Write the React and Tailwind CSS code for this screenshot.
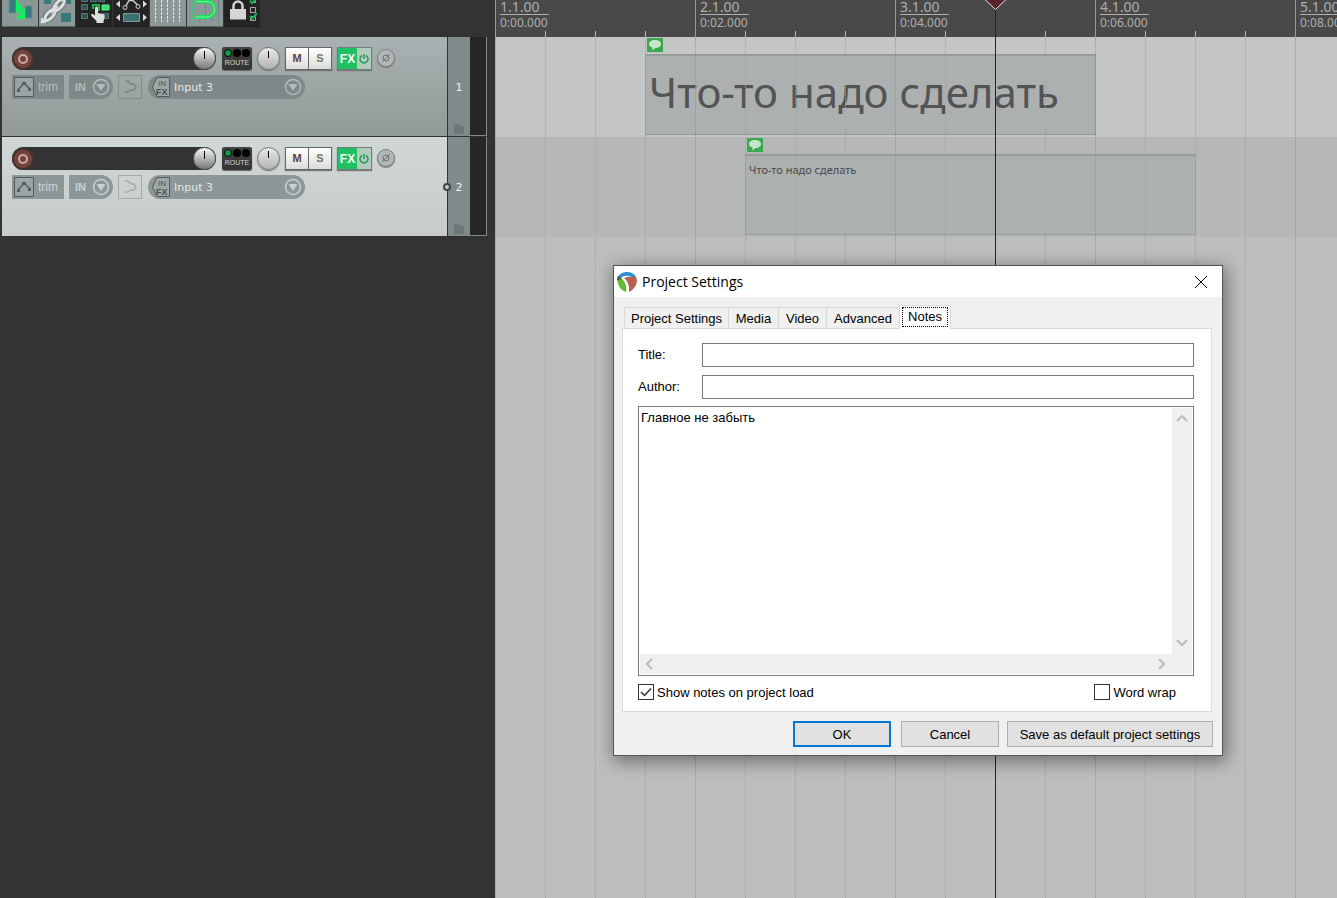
import React from "react";

const BEATS = Array.from({ length: 17 }, (_, i) => i);

const MEASURES = [
  { bar: "1.1.00", time: "0:00.000" },
  { bar: "2.1.00", time: "0:02.000" },
  { bar: "3.1.00", time: "0:04.000" },
  { bar: "4.1.00", time: "0:06.000" },
  { bar: "5.1.00", time: "0:08.000" },
];

const TABS = [
  { name: "Project Settings", width: "w-[104px]" },
  { name: "Media", width: "w-[50px]" },
  { name: "Video", width: "w-[48px]" },
  { name: "Advanced", width: "w-[73px]" },
];

/* ---------- TOOLBAR ---------- */

const ToolButton = ({ label, active, children }) => (
  <button
    aria-label={label}
    className={
      active
        ? "h-[27px] w-[36px] border-b border-[#5c6464] bg-[#8c9898]"
        : "h-[27px] w-[36px] border-b border-[#1c1c1c] bg-[#242424]"
    }
  >
    <svg width="36" height="26" viewBox="0 0 36 26" fill="none">
      {children}
    </svg>
  </button>
);

const Toolbar = () => (
  <div className="flex h-[37px] gap-px pl-[2px]">
    <ToolButton label="Auto-crossfade" active>
      <path d="M7-1h7v14h-7z M23 6h7v12h-7z" fill="#367a7e" stroke="#6d8a8b" />
      <path d="M14-1v14h2l5-4z" fill="#0cf25a" />
      <path d="M23 7v12h-9z" fill="#0cf25a" />
    </ToolButton>
    <ToolButton label="Item grouping" active>
      <path d="M5 0h7v4h-7z M4 14h5v8h-5z M21 0h11v4h-11z M22 13h10v9h-10z" fill="#367a7e" />
      <g stroke="#6a7676" strokeWidth="5">
        <ellipse cx="11" cy="15" rx="7" ry="3" transform="rotate(-48 11 15)" />
        <ellipse cx="20" cy="5" rx="7" ry="3" transform="rotate(-48 20 5)" />
      </g>
      <g stroke="#dcdfdf" strokeWidth="3">
        <ellipse cx="11" cy="15" rx="7" ry="3" transform="rotate(-48 11 15)" />
        <ellipse cx="20" cy="5" rx="7" ry="3" transform="rotate(-48 20 5)" />
      </g>
      <path d="M2 23l5-5M12 13l7-7M3 18v4h4" stroke="#dcdfdf" strokeWidth="2" />
    </ToolButton>
    <ToolButton label="Ripple editing">
      <path
        d="M5.5-2.500h6v4h-6z M14.500-2.500h6v4h-6z M22.500-2.500h6v4h-6z M5.500 4.500h6v5h-6z M5.500 13.500h6v5h-6z M26.500 13.500h6v5h-6z"
        fill="#2f5557"
        stroke="#5c7476"
      />
      <path d="M26 5h7v5h-7z" fill="#2fe06c" stroke="#63f091" />
      <path d="M17 9v-4h6v6" stroke="#12b84e" strokeWidth="2" />
      <path
        d="M19 8c0-2 3-2 3 0v5l5 1c2 .5 2 2 1.500 4l-1 3v2h-7v-2l-5-5c-1-2 1-3 2-1.500l1.500 1z"
        fill="#dedede"
      />
    </ToolButton>
    <ToolButton label="Envelope points">
      <path d="M12 7.500l4-7h4l5 5" stroke="#cfcfcf" strokeWidth="1.500" />
      <circle cx="12" cy="7.500" r="2" fill="#242424" stroke="#cfcfcf" />
      <circle cx="25" cy="6.500" r="2" fill="#242424" stroke="#cfcfcf" />
      <path d="M7 0.500v7l-4-3.500z M30 0.500v7l4-3.500z M7 14v7l-4-3.500z M30 14v7l4-3.500z" fill="#dadada" />
      <path d="M10.500 13.500h16v8h-16z" fill="#3c7074" stroke="#7f9799" />
    </ToolButton>
    <ToolButton label="Grid lines" active>
      <path d="M5.500 0v22M11.500 0v22M17.500 0v22M23.500 0v22M29.500 0v22" stroke="#e4e7e7" strokeDasharray="3 1" />
    </ToolButton>
    <ToolButton label="Snapping" active>
      <path d="M6 0v22" stroke="#18e05c" strokeDasharray="2 1" strokeWidth="1.500" />
      <path d="M18.500 0v22M31.500 0v22M12.500 20v2M25.500 16v6" stroke="#6c7878" strokeDasharray="2 1" />
      <path d="M9 1.500h11a7.500 7.500 0 0 1 0 15.500h-11" stroke="#16e25e" strokeWidth="4" />
      <path d="M9 1.500h11a7.500 7.500 0 0 1 0 15.500h-11" stroke="#7df0a4" />
    </ToolButton>
    <ToolButton label="Locking">
      <path d="M9.500 10v-4a4.500 4.500 0 0 1 9 0v4" stroke="#d6d6d6" strokeWidth="2.500" />
      <path d="M6 9h16v10.500h-16z" fill="#d6d6d6" />
      <path d="M26.500-2.500h5v5h-5z M26.500 7.500h5v5h-5z M26.500 16.500h5v4h-5z" stroke="#a8a8a8" />
      <path d="M26 1l2 2 5-5M26 16l2 3 5-6" stroke="#14b33f" strokeWidth="2" />
    </ToolButton>
  </div>
);

/* ---------- TRACK PANEL ---------- */

const DropArrow = () => (
  <svg className="shrink-0" width="18" height="18" viewBox="0 0 18 18" fill="none">
    <circle cx="9" cy="9" r="7.500" stroke="currentColor" strokeWidth="1.500" />
    <path d="M4.500 6h9l-4.500 7z" fill="currentColor" />
  </svg>
);

const Track = ({ number, selected }) => (
  <div className="flex h-[100px] border-b border-[#303030]">
    <div
      className={
        selected
          ? "min-w-0 flex-1 border-r border-[#333] bg-linear-to-b from-[#d0d8d7] to-[#c7cbcb] pt-[10px] pl-[10px]"
          : "min-w-0 flex-1 border-r border-[#333] bg-linear-to-b from-[#a9b1b2] to-[#919a98] pt-[10px] pl-[10px]"
      }
    >
      {/* record, volume, route, pan, mute, solo, fx, phase */}
      <div className="flex h-[24px] items-start">
        <div className="flex h-[23px] w-[204px] items-center justify-between rounded-full bg-[#333]">
          <button aria-label="Record arm" className="flex h-[22px] w-[22px] items-center justify-center rounded-full border-2 border-[#45332f] bg-[#74443a]">
            <span className="h-[10px] w-[10px] rounded-full border-2 border-[#c9aca5]"></span>
          </button>
          <button aria-label="Volume" className="flex h-[23px] w-[23px] justify-center rounded-full border border-[#555] bg-linear-to-b from-[#fafafa] to-[#777] pt-[3px]">
            <span className="h-[8px] w-px bg-black"></span>
          </button>
        </div>
        <button className="ml-[6px] flex h-[23px] w-[30px] flex-col items-center rounded-xs bg-linear-to-b from-[#444] to-[#343434] pt-[2px] shadow-[0_1px_1px_#666]">
          <span className="flex gap-px">
            <i className="h-[8px] w-[8px] rounded-full border border-black bg-[#0c9c48]"></i>
            <i className="h-[8px] w-[8px] rounded-full bg-black"></i>
            <i className="h-[8px] w-[8px] rounded-full bg-black"></i>
          </span>
          <span className="text-[7px] leading-[12px] text-[#d4d4d4]">ROUTE</span>
        </button>
        <button aria-label="Pan" className="ml-[5px] flex h-[23px] w-[23px] justify-center rounded-full border border-[#777] bg-linear-to-b from-[#e9e9e9] to-[#b3b3b3] pt-[3px] shadow-[0_1px_1px_#777]">
          <span className="h-[7px] w-px bg-black"></span>
        </button>
        <button className="ml-[5px] h-[23px] w-[24px] border border-[#666] bg-linear-to-b from-white to-[#dcdcdc] text-[11px] font-bold text-[#65402f] shadow-[0_1px_1px_#777]">M</button>
        <button className="h-[23px] w-[23px] border border-l-0 border-[#666] bg-linear-to-b from-white to-[#dcdcdc] text-[11px] font-bold text-[#73784f] shadow-[0_1px_1px_#777]">S</button>
        <div className="ml-[5px] flex h-[23px] w-[35px] border border-[#6f7f76] shadow-[0_1px_1px_#777]">
          <button className="w-[19px] bg-[#20c065] text-[12px] leading-[20px] font-bold text-white">FX</button>
          <button aria-label="FX bypass" className="flex flex-1 items-center justify-center bg-[#b2cdbd]">
            <svg width="10" height="10" viewBox="0 0 10 10" fill="none" stroke="#279a5d" strokeWidth="1.500">
              <path d="M3 1.500a4 4 0 1 0 4 0M5 0v5" />
            </svg>
          </button>
        </div>
        <button aria-label="Phase" className="mt-[2px] ml-[5px] flex h-[18px] w-[18px] items-center justify-center rounded-full border border-[#7d8484] bg-[#b2b8b8] shadow-[0_1px_1px_#777]">
          <svg width="10" height="10" viewBox="0 0 10 10" fill="none" stroke="#6b7272">
            <circle cx="5" cy="5" r="3" />
            <path d="M1 9l8-8" />
          </svg>
        </button>
      </div>

      {/* envelope, input, recording mode, input fx */}
      <div className={selected ? "mt-[4px] flex h-[24px] text-[#c9d0d0]" : "mt-[4px] flex h-[24px] text-[#b4bbbb]"}>
        <button className={selected ? "flex w-[52px] items-center bg-[#8e9797] pl-[2px]" : "flex w-[52px] items-center bg-[#7f8888] pl-[2px]"}>
          <svg width="20" height="20" viewBox="0 0 20 20" fill="none">
            <path d="M.5.5h19v19h-19z" fill="#98a4a6" stroke="#515b5b" />
            <path d="M4 13l6-7 6 6" stroke="#566060" strokeWidth="1.500" />
            <path d="M3 12h3v3h-3z M8 5h4v3h-4z M14 11h3v3h-3z" fill="#566060" />
          </svg>
          <span className="ml-[4px] text-[12px]">trim</span>
        </button>
        <button className={selected ? "ml-[5px] flex w-[44px] items-center justify-between rounded-r-full bg-[#8e9797] pr-[3px] pl-[6px]" : "ml-[5px] flex w-[44px] items-center justify-between rounded-r-full bg-[#7f8888] pr-[3px] pl-[6px]"}>
          <span className="text-[11px] font-bold">IN</span>
          <DropArrow />
        </button>
        <button aria-label="Record mode" className={selected ? "ml-[5px] w-[24px] border border-[#a3aaaa] text-[#a3aaaa]" : "ml-[5px] w-[24px] border border-[#848c8c] text-[#7c8484]"}>
          <svg width="22" height="22" viewBox="0 0 22 22" fill="none" stroke="currentColor" strokeWidth="1.500">
            <path d="M6 5h3l3 3h3l2 3-2 3h-3l-3 2h-3" />
          </svg>
        </button>
        <button className={selected ? "ml-[6px] flex w-[157px] items-center rounded-full bg-[#8e9797] pr-[3px] pl-[4px]" : "ml-[6px] flex w-[157px] items-center rounded-full bg-[#7f8888] pr-[3px] pl-[4px]"}>
          <svg className="shrink-0" width="18" height="20" viewBox="0 0 18 20">
            <path d="M5 .5h12.500v19h-12.500l-4.500-9.500z" fill="#9ca8a9" stroke="#515b5b" />
            <text x="6" y="9" fontSize="8" fill="#4a5454">IN</text>
            <text x="4" y="18" fontSize="9" fontWeight="bold" fill="#444e4e">FX</text>
          </svg>
          <span className="ml-[4px] flex-1 pt-[2px] text-left font-['DejaVu_Sans',sans-serif] text-[11px] text-[#e3e6e6]">Input 3</span>
          <DropArrow />
        </button>
      </div>
    </div>

    {/* track number and meter */}
    <div className="relative flex w-[22px] flex-col items-center bg-[#808a8b] pt-[43px] font-['DejaVu_Sans',sans-serif] text-[11px] leading-[16px] text-[#eef0f0]">
      {number}
      {selected && <span className="absolute top-[46px] -left-[5px] h-[8px] w-[8px] rounded-full border-2 border-[#444] bg-[#c8cccc]"></span>}
      <svg className="mt-auto mb-[2px]" width="10" height="10" viewBox="0 0 10 10" fill="#6e7778">
        <path d="M0 0h5l1 2h4v8h-10z" />
      </svg>
    </div>
    <div className="w-[17px] border-r border-b border-[#808a8b] bg-[#262626]"></div>
  </div>
);

/* ---------- ARRANGE VIEW ---------- */

const NoteBadge = () => (
  <svg width="16" height="14" viewBox="0 0 16 14">
    <path d="M0 0h16v14h-16z" fill="#3aa84c" />
    <path d="M8 2c4 0 6 2 6 4s-2 4-5.500 4l-3 2.500v-3c-2-.5-3.500-1.500-3.500-3.500s2-4 6-4z" fill="#c3e6c8" />
  </svg>
);

const Ruler = () => (
  <div className="relative h-[37px] bg-[#494949] text-[#aeaeae]">
    {BEATS.map((b) => (
      <span
        key={b}
        className={b % 4 === 0 ? "absolute bottom-0 h-full w-px bg-[#9a9a9a]" : "absolute bottom-0 h-[6px] w-px bg-[#b5b5b5]"}
        style={{ left: b * 50 }}
      ></span>
    ))}
    {MEASURES.map((m, i) => (
      <div key={m.bar} className="absolute top-0 flex w-[49px] flex-col font-['Noto_Sans',sans-serif]" style={{ left: i * 200 + 5 }}>
        <span className="h-[15px] border-b border-[#aeaeae] text-[14px] leading-[14px]">{m.bar}</span>
        <span className="text-[12px] leading-[16px]">{m.time}</span>
      </div>
    ))}
  </div>
);

const Arrange = () => (
  <main className="relative flex min-w-0 flex-1 flex-col overflow-hidden">
    <Ruler />
    <div className="relative flex flex-1 flex-col bg-[#bdbfbe]">
      <div className="h-[100px] bg-[#c4c6c5]"></div>
      <div className="h-[100px] bg-[#b6b8b7]"></div>

      {/* text items */}
      <div className="absolute top-px left-[150px] w-[451px]">
        <div className="h-[16px] pl-[2px]"><NoteBadge /></div>
        <div className="flex h-[81px] items-center border border-t-2 border-[#979b9c] bg-[#acb0b1] pb-[6px] pl-[3px] font-['Noto_Sans',sans-serif] text-[42px] leading-[48px] whitespace-nowrap text-[#545454]">
          Что-то надо сделать
        </div>
      </div>
      <div className="absolute top-[101px] left-[250px] w-[451px]">
        <div className="h-[16px] pl-[2px]"><NoteBadge /></div>
        <div className="h-[81px] border border-t-2 border-[#979b9c] bg-[#acb0b1] pt-[6px] pl-[3px] font-['Noto_Sans',sans-serif] text-[11px] leading-[16px] text-[#484848]">
          Что-то надо сделать
        </div>
      </div>

      {BEATS.map((b) => (
        <span
          key={b}
          className={b % 4 === 0 ? "absolute inset-y-0 border-l border-dotted border-[#949696]" : "absolute inset-y-0 border-l border-dotted border-[#a0a2a2]"}
          style={{ left: b * 50 }}
        ></span>
      ))}
    </div>

    {/* edit cursor */}
    <span className="absolute inset-y-0 left-[500px] w-px bg-[#481418]"></span>
    <svg className="absolute top-0 left-[490px]" width="21" height="11" viewBox="0 0 21 11">
      <path d="M0-.5l10.500 10 10.500-10z" fill="#572427" stroke="#e6e6e6" />
    </svg>
  </main>
);

/* ---------- DIALOG ---------- */

const Chevron = ({ d }) => (
  <svg width="12" height="12" viewBox="0 0 12 12" fill="none" stroke="#bcbcbc" strokeWidth="2">
    <path d={d} />
  </svg>
);

const Field = ({ id, label }) => (
  <div className="flex h-[24px] items-center">
    <label htmlFor={id} className="w-[64px]">{label}</label>
    <input id={id} type="text" className="h-full min-w-0 flex-1 border border-[#7a7a7a] bg-white px-1 outline-none" />
  </div>
);

const Check = ({ label, checked }) => (
  <label className="flex h-[16px] items-center gap-[3px]">
    <span className="relative h-[16px] w-[16px]">
      <input type="checkbox" defaultChecked={checked} className="peer block h-[16px] w-[16px] appearance-none border border-[#333] bg-white" />
      <svg className="pointer-events-none absolute inset-0 hidden peer-checked:block" width="16" height="16" viewBox="0 0 16 16" fill="none" stroke="#333" strokeWidth="1.500">
        <path d="M3 8l3.500 3.500 6.500-7" />
      </svg>
    </span>
    <span className="pt-[2px]">{label}</span>
  </label>
);

const ProjectSettings = () => (
  <div
    role="dialog"
    aria-label="Project Settings"
    className="absolute top-[265px] left-[613px] w-[610px] border border-[#555] bg-[#f0f0f0] pb-[8px] text-[13px] leading-[16px] text-black shadow-[2px_4px_16px_2px_rgba(0,0,0,0.4)]"
  >
    <div className="flex h-[31px] items-center bg-white pr-[14px] pl-[3px]">
      <svg width="20" height="20" viewBox="0 0 20 20">
        <path d="M1 5C3 1 7 0 10 0s7 1 9 5l-3 1c-3-3-9-3-12 0z" fill="#2a94d6" />
        <path d="M1 5c-2 6 2 13 8 15 1-5 0-10-5-14z" fill="#63bb35" />
        <path d="M7 6c4-2 8-1 12-1 3 6-2 13-7 15 0-6-1-11-5-14z" fill="#b95f53" />
        <path d="M6 6c4 2 6 6 6 13l-2 .5c1-6-1-10-5-13z" fill="#fff" />
        <path d="M0 8c0-2 .5-3 1.500-4.500l3 3-3 2z" fill="#4b5f4a" />
      </svg>
      <span className="ml-[5px] flex-1 font-['Open_Sans','Noto_Sans',sans-serif] text-[14px]">Project Settings</span>
      <button aria-label="Close">
        <svg width="14" height="14" viewBox="0 0 14 14" stroke="#000">
          <path d="M1 1l12 12M13 1l-12 12" />
        </svg>
      </button>
    </div>

    <div className="px-[8px] pt-[8px]">
      {/* tabs */}
      <div role="tablist" className="relative z-10 -mb-px flex h-[24px] items-end pl-[2px]">
        {TABS.map((tab) => (
          <button key={tab.name} role="tab" className={`${tab.width} h-[22px] border border-r-0 border-[#d9d9d9] pt-px whitespace-nowrap`}>
            {tab.name}
          </button>
        ))}
        <button role="tab" aria-selected="true" className="h-[24px] w-[52px] border border-b-0 border-[#d9d9d9] bg-white px-[2px] pb-[2px]">
          <span className="block border border-dotted border-black leading-[18px]">Notes</span>
        </button>
      </div>

      {/* notes page */}
      <div className="mr-[2px] flex flex-col border border-[#dcdcdc] bg-white pt-[14px] pr-[17px] pb-[11px] pl-[15px]">
        <div className="flex flex-col gap-[8px]">
          <Field id="title" label="Title:" />
          <Field id="author" label="Author:" />
        </div>
        <div className="mt-[7px] grid h-[270px] grid-cols-[1fr_20px] grid-rows-[1fr_20px] border border-[#7a7a7a] p-px">
          <textarea aria-label="Notes" defaultValue="Главное не забыть" className="resize-none overflow-hidden px-px pt-[2px] outline-none" />
          <div className="flex flex-col items-center justify-between bg-[#f0f0f0] py-[5px]">
            <Chevron d="M1 8l5-5 5 5" />
            <Chevron d="M1 3l5 5 5-5" />
          </div>
          <div className="flex items-center justify-between bg-[#f0f0f0] px-[5px]">
            <Chevron d="M7 1l-5 5 5 5" />
            <Chevron d="M4 1l5 5-5 5" />
          </div>
          <div className="bg-[#f0f0f0]"></div>
        </div>
        <div className="mt-[8px] flex justify-between pr-[18px]">
          <Check label="Show notes on project load" checked />
          <Check label="Word wrap" />
        </div>
      </div>

      <div className="mt-[9px] flex justify-end pr-px">
        <button className="h-[26px] w-[98px] border-2 border-[#0078d7] bg-[#e1e1e1] pt-px">OK</button>
        <button className="ml-[10px] h-[26px] w-[98px] border border-[#adadad] bg-[#e1e1e1] pt-px">Cancel</button>
        <button className="ml-[8px] h-[26px] w-[206px] border border-[#adadad] bg-[#e1e1e1] pt-px whitespace-nowrap">Save as default project settings</button>
      </div>
    </div>
  </div>
);

const App = () => {
  return (
    <div className="relative flex min-h-screen overflow-hidden bg-[#333] font-['Liberation_Sans',Arial,sans-serif]">
      <aside className="w-[495px] shrink-0">
        <Toolbar />
        <div className="mr-[8px] ml-[2px]">
          <Track number={1} />
          <Track number={2} selected />
        </div>
      </aside>
      <Arrange />
      <ProjectSettings />
    </div>
  );
};

export default App;
